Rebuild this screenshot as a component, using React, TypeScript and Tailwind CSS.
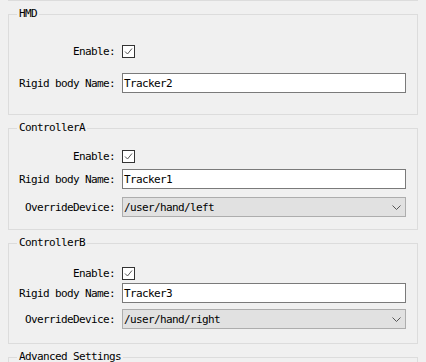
import type { ReactNode } from 'react'

const FONT = "font-['DejaVu_Sans_Mono',monospace] text-[11px] leading-[13px] tracking-[-0.62px] text-black"

function Group({ title, className, children }: { title: string; className: string; children?: ReactNode }) {
  return (
    <div className={`relative w-[410px] shrink-0 border border-[#dcdcdc] ${className}`}>
      <span className="absolute left-[8px] top-[-8px] bg-[#f0f0f0] px-[2px] leading-[14px]">{title}</span>
      {children}
    </div>
  )
}

function Row({ label, className = '', children }: { label: string; className?: string; children: ReactNode }) {
  return (
    <div className={`flex items-center ${className}`}>
      <span className="w-[112px] text-right whitespace-pre">{label}</span>
      <div className="ml-[1px]">{children}</div>
    </div>
  )
}

function Check() {
  return (
    <svg width="13" height="13" viewBox="0 0 13 13" className="block">
      <rect x="0.5" y="0.5" width="12" height="12" fill="#fff" stroke="#333" />
      <path d="M3 6.5 L5.5 9 L10 3.5" fill="none" stroke="#555" strokeWidth="1" />
    </svg>
  )
}

function TextBox({ value }: { value: string }) {
  return (
    <div className="w-[284px] h-[20px] border border-[#7a7a7a] bg-white pl-[1px] flex items-center leading-none">
      {value}
    </div>
  )
}

function Select({ value }: { value: string }) {
  return (
    <div className="w-[284px] h-[20px] border border-[#adadad] bg-[#e1e1e1] pl-[1px] pr-[4px] flex items-center justify-between leading-none">
      <span>{value}</span>
      <svg width="9" height="5" viewBox="0 0 9 5" className="block">
        <path d="M0.5 0.5 L4.5 4.5 L8.5 0.5" fill="none" stroke="#555" strokeWidth="1" />
      </svg>
    </div>
  )
}

export default function App() {
  return (
    <div className={`h-[362px] bg-[#f0f0f0] overflow-hidden pl-[8px] flex flex-col gap-[13px] ${FONT}`}>
      <div className="w-[410px] h-px shrink-0 bg-[#dcdcdc]" />

      <Group title="HMD" className="h-[101px] pt-[30px]">
        <Row label="Enable: ">
          <Check />
        </Row>
        <Row label="Rigid body Name: " className="mt-[15px]">
          <TextBox value="Tracker2" />
        </Row>
      </Group>

      <Group title="ControllerA" className="h-[102px] pt-[21px]">
        <Row label="Enable: ">
          <Check />
        </Row>
        <Row label="Rigid body Name: " className="mt-[6px]">
          <TextBox value="Tracker1" />
        </Row>
        <Row label="OverrideDevice: " className="mt-[8px]">
          <Select value="/user/hand/left" />
        </Row>
      </Group>

      <Group title="ControllerB" className="h-[101px] pt-[23px]">
        <Row label="Enable: ">
          <Check />
        </Row>
        <Row label="Rigid body Name: " className="mt-[3px]">
          <TextBox value="Tracker3" />
        </Row>
        <Row label="OverrideDevice: " className="mt-[6px]">
          <Select value="/user/hand/right" />
        </Row>
      </Group>

      <Group title="Advanced Settings" className="h-[60px]" />
    </div>
  )
}
